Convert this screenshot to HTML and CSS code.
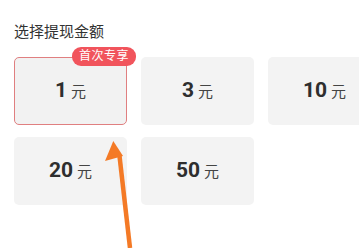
FILE: index.html
```html
<!DOCTYPE html>
<html lang="zh">
<head>
<meta charset="utf-8">
<link rel="stylesheet" href="styles.css">
</head>
<body>
<div class="page">
  <div class="title">选择提现金额</div>
  <div class="clip">
    <div class="grid">
      <div class="card selected">
        <span class="badge">首次专享</span>
        <span class="num">1</span><span class="unit">元</span>
      </div>
      <div class="card"><span class="num">3</span><span class="unit">元</span></div>
      <div class="card"><span class="num">10</span><span class="unit">元</span></div>
      <div class="card"><span class="num">20</span><span class="unit">元</span></div>
      <div class="card"><span class="num">50</span><span class="unit">元</span></div>
    </div>
  </div>
  <svg class="arrow" width="359" height="248" viewBox="0 0 359 248">
    <path d="M119.5 156 L130 248" stroke="#f47a26" stroke-width="4.5" fill="none"/>
    <polygon points="113.3,141 105,161 123,156" fill="#f47a26"/>
  </svg>
</div>
</body>
</html>
```
FILE: styles.css
```css
html, body {
  margin: 0;
  padding: 0;
  background: #ffffff;
}
body {
  width: 359px;
  height: 248px;
  overflow: hidden;
  font-family: Roboto, "Noto Sans CJK SC", sans-serif;
}
.page {
  position: relative;
  width: 359px;
  height: 248px;
  padding: 22px 0 0 0;
  box-sizing: border-box;
  overflow: hidden;
}
.title {
  font-size: 15px;
  line-height: 20px;
  color: #333333;
  margin: 0 0 4px 14px;
}
.clip {
  width: 359px;
  overflow: hidden;
  padding: 11px 0 0 14px;
  box-sizing: border-box;
}
.grid {
  display: grid;
  grid-template-columns: 113px 113px 113px;
  grid-auto-rows: 68px;
  column-gap: 14px;
  row-gap: 12px;
}
.card {
  position: relative;
  background: #f3f3f3;
  border-radius: 5px;
  display: flex;
  align-items: baseline;
  justify-content: center;
  padding-top: 21px;
  box-sizing: border-box;
}
.card.selected {
  border: 1px solid #e07f80;
  background: #f2f2f2;
  padding-top: 20px;
}
.num {
  font-size: 21px;
  font-weight: 700;
  color: #2e2e2e;
  line-height: 24px;
}
.unit {
  font-size: 15px;
  color: #444444;
  margin-left: 4px;
}
.badge {
  position: absolute;
  top: -11px;
  right: -10px;
  height: 19px;
  line-height: 19px;
  padding: 0 7px;
  font-size: 12px;
  color: #ffffff;
  background: #f1545c;
  border-radius: 9px;
  letter-spacing: 0.5px;
}
.arrow {
  position: absolute;
  left: 0;
  top: 0;
}
```
